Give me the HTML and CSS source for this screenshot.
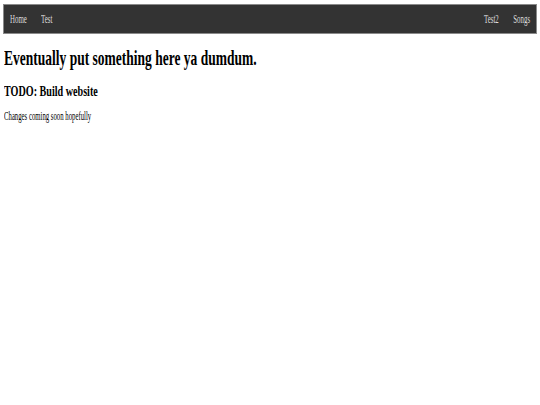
FILE: index.html
```html
<!DOCTYPE html>
<html>
<head>
<meta charset="utf-8">
<link rel="stylesheet" href="styles.css">
</head>
<body>
<nav class="navbar">
  <div class="nav-left">
    <a class="nav-link" href="#"><span class="sq sq-nav">Home</span></a>
    <a class="nav-link" href="#"><span class="sq sq-nav">Test</span></a>
  </div>
  <div class="nav-right">
    <a class="nav-link" href="#"><span class="sq sq-nav sq-r">Test2</span></a>
    <a class="nav-link" href="#"><span class="sq sq-nav sq-r">Songs</span></a>
  </div>
</nav>
<main class="content">
  <h1 class="title"><span class="sq sq-title">Eventually put something here ya dumdum.</span></h1>
  <h2 class="subtitle"><span class="sq">TODO: Build website</span></h2>
  <p class="note"><span class="sq sq-note">Changes coming soon hopefully</span></p>
</main>
</body>
</html>
```
FILE: styles.css
```css
html, body {
  margin: 0;
  padding: 0;
  background: #fff;
  font-family: "Liberation Serif", "Times New Roman", serif;
  color: #000;
}
.sq {
  display: inline-block;
  transform: scaleX(0.675);
  transform-origin: left center;
  white-space: nowrap;
}
.sq-title {
  transform: scaleX(0.643);
}
.sq-note {
  transform: scaleX(0.587);
}
.sq-nav {
  transform: scaleX(0.6);
}
.sq-r {
  transform-origin: right center;
}
.navbar {
  margin: 4px 3px 0 3px;
  height: 30px;
  box-sizing: border-box;
  background: #333;
  border: 1px solid #8a8a8a;
  display: flex;
  justify-content: space-between;
  align-items: center;
  padding: 0 6px;
}
.nav-left, .nav-right {
  display: flex;
  align-items: center;
  gap: 3px;
}
.nav-link {
  color: #ddd;
  text-decoration: none;
  font-size: 11.5px;
}
.content {
  padding: 0 4px;
}
.title {
  font-size: 21px;
  font-weight: bold;
  margin: 12px 0 0 0;
  line-height: 24px;
}
.subtitle {
  font-size: 15px;
  font-weight: bold;
  margin: 13px 0 0 0;
  line-height: 17px;
}
.note {
  font-size: 11.5px;
  margin: 10px 0 0 0;
  line-height: 13px;
}
```
